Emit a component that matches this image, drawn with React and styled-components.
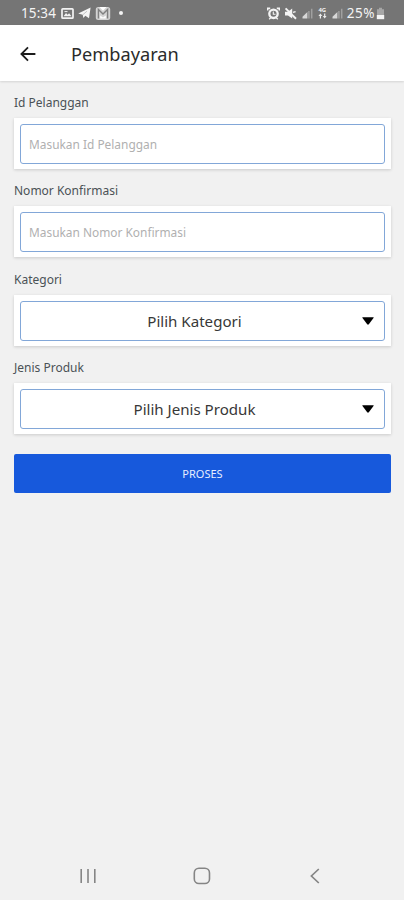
// react stuff
import { React, useState } from "react";
// styled components
import styled, { createGlobalStyle } from "styled-components";

const textFields = [
  {
    name: "idPelanggan",
    label: "Id Pelanggan",
    placeholder: "Masukan Id Pelanggan",
  },
  {
    name: "nomorKonfirmasi",
    label: "Nomor Konfirmasi",
    placeholder: "Masukan Nomor Konfirmasi",
  },
];

const pickerFields = [
  { name: "kategori", label: "Kategori", text: "Pilih Kategori" },
  { name: "produk", label: "Jenis Produk", text: "Pilih Jenis Produk" },
];

const StatusIcons = () => {
  return (
    <>
      {/* gallery */}
      <Icon width="13" height="13" viewBox="0 0 13 13">
        <rect x="1" y="1.8" width="11" height="9.4" rx="0.8" fill="none" stroke="#f2f2f2" strokeWidth="1.7" />
        <path d="M2.5 9.3 5 6l1.6 1.8 1.5-1.6 2.4 3.1z" fill="#f2f2f2" />
        <path d="M3.5 4.6h3" stroke="#f2f2f2" strokeWidth="1" />
      </Icon>
      {/* telegram */}
      <Icon width="13" height="12" viewBox="0 0 13 12" $left={4}>
        <path d="M0.2 6.6 12.6 0.6 11 11.2 7.3 8.8 5.4 10.9 4.7 7.8z" fill="#f4f4f4" />
        <path d="M5 7.6 9 4.2" stroke="#a5a5a5" strokeWidth="0.6" />
      </Icon>
      {/* mail */}
      <Icon width="16" height="15" viewBox="0 0 16 15" $left={4}>
        <rect x="0.8" y="1" width="14.4" height="13" rx="2.5" fill="#d4d4d4" />
        <path d="M3.4 12.5v-9L8 8l4.6-4.5v9" fill="none" stroke="#808080" strokeWidth="1.4" />
        <path d="M5.2 12.6V9.4L8 11.4l2.8-2v3.2z" fill="#fff" />
        <path d="M4.5 1h7L8 4.8z" fill="#fff" />
      </Icon>
    </>
  );
};

const Signal = ({ left }) => {
  return (
    <Icon width="11" height="11" viewBox="0 0 11 11" $left={left}>
      <path d="M0.5 10.5V8.8L5.4 4v6.5z" fill="#d8d8d8" />
      <path d="M6.9 10.5V3M9.7 10.5V0.8" stroke="#a0a0a0" strokeWidth="1.5" />
    </Icon>
  );
};

const App = () => {
  // state
  const [values, setValues] = useState({});
  return (
    <>
      <GlobalStyle />
      <Screen>
        {/* status bar */}
        <StatusBar>
          <StatusText $size={13.5} $spacing={0.1}>
            15:34
          </StatusText>
          <StatusGroup $left={5}>
            <StatusIcons />
            <Dot />
          </StatusGroup>
          <StatusGroup $left="auto">
            {/* alarm */}
            <Icon width="13" height="13" viewBox="0 0 13 13">
              <path d="M0.6 3.6V1.4h2.6M12.4 3.6V1.4H9.8" fill="none" stroke="#f4f4f4" strokeWidth="1.7" />
              <circle cx="6.5" cy="6.8" r="4.2" fill="#757575" stroke="#f4f4f4" strokeWidth="2.3" />
              <path d="M6.3 4.4v2.9h2.2" fill="none" stroke="#f4f4f4" strokeWidth="1.1" />
              <path d="M2.2 12.2 4 10.6M10.8 12.2 9 10.6" stroke="#f4f4f4" strokeWidth="1.4" />
            </Icon>
            {/* muted */}
            <Icon width="13" height="13" viewBox="0 0 13 13" $left={4}>
              <path d="M1 4.7h3L8.2 1.4v10L4 8.6H1z" fill="#f4f4f4" />
              <path d="M9 5.4 11.6 4.6" stroke="#f4f4f4" strokeWidth="1.4" />
              <path d="M1.6 1.4 12 11.8" stroke="#f4f4f4" strokeWidth="2" />
            </Icon>
            <Signal left={5} />
            <Network>
              <span>4G</span>
              <svg width="9" height="6" viewBox="0 0 9 6">
                <path d="M0.4 3 2.4 0.4 4.3 3H3v2.6H1.8V3zM4.8 3h1.3V0.4h1.2V3h1.3L6.7 5.6z" fill="#eee" />
              </svg>
            </Network>
            <Signal left={5} />
            <StatusText $size={13.5} $spacing={0.5} $left={4}>
              25%
            </StatusText>
            <Icon width="9" height="13" viewBox="0 0 9 13" $left={1}>
              <path d="M3 0.8h3v1.4h2V8H1V2.2h2z" fill="#a6a6a6" />
              <path d="M0.8 8h7.4v4.2H0.8z" fill="#f4f4f4" />
            </Icon>
          </StatusGroup>
        </StatusBar>
        {/* header */}
        <Header>
          <BackButton type="button" aria-label="Kembali">
            <svg width="16" height="16" viewBox="0 0 16 16">
              <path d="M15.4 8H1.6M8 1.4 1.4 8 8 14.6" fill="none" stroke="#1c1c1c" strokeWidth="1.8" />
            </svg>
          </BackButton>
          <Title>Pembayaran</Title>
        </Header>
        {/* form */}
        <Form onSubmit={(e) => e.preventDefault()}>
          {textFields.map((item) => {
            const { name, label, placeholder } = item;
            return (
              <Field key={name}>
                <Label htmlFor={name}>{label}</Label>
                <Card>
                  <Input
                    id={name}
                    type="text"
                    placeholder={placeholder}
                    value={values[name] || ""}
                    onChange={(e) => {
                      setValues({ ...values, [name]: e.target.value });
                    }}
                  />
                </Card>
              </Field>
            );
          })}
          {pickerFields.map((item) => {
            const { name, label, text } = item;
            return (
              <Field key={name}>
                <Label as="span">{label}</Label>
                <Card>
                  <Picker type="button">
                    <PickerText>{text}</PickerText>
                    <svg width="12" height="8" viewBox="0 0 12 8">
                      <path d="M0.8 0.3h10.4q0.9 0 0.3 0.8L6.8 7.2q-0.8 0.9-1.6 0L0.5 1.1q-0.6-0.8 0.3-0.8z" fill="#000" />
                    </svg>
                  </Picker>
                </Card>
              </Field>
            );
          })}
          <Submit type="submit">PROSES</Submit>
        </Form>
        {/* system navigation */}
        <NavBar>
          <svg width="16" height="16" viewBox="0 0 16 16">
            <path d="M1.2 1v14M8 1v14M14.8 1v14" stroke="#858585" strokeWidth="1.6" />
          </svg>
          <HomeIcon width="18" height="18" viewBox="0 0 18 18">
            <rect x="1.3" y="1.3" width="15.2" height="15.2" rx="4.6" fill="none" stroke="#858585" strokeWidth="1.6" />
          </HomeIcon>
          <svg width="10" height="16" viewBox="0 0 10 16">
            <path d="M8.8 1 1.4 8l7.4 7" fill="none" stroke="#858585" strokeWidth="1.7" />
          </svg>
        </NavBar>
      </Screen>
    </>
  );
};

const GlobalStyle = createGlobalStyle`
  * {
    box-sizing: border-box;
  }
  body {
    margin: 0;
    background: #f1f1f1;
  }
  body,
  button,
  input {
    font-family: "Noto Sans", "Open Sans", sans-serif;
  }
  svg {
    display: block;
    flex: none;
  }
`;

const Screen = styled.main`
  width: 404px;
  height: 900px;
  display: flex;
  flex-direction: column;
  background: #f1f1f1;
  overflow: hidden;
`;

const StatusBar = styled.div`
  flex: none;
  height: 25px;
  padding: 1px 19px 0 21px;
  display: flex;
  align-items: center;
  background: #757575;
  color: #f4f4f4;
`;

const StatusGroup = styled.div`
  display: flex;
  align-items: center;
  margin-left: ${({ $left }) => ($left === "auto" ? "auto" : `${$left}px`)};
`;

const StatusText = styled.span`
  font-size: ${({ $size }) => $size}px;
  letter-spacing: ${({ $spacing }) => $spacing}px;
  line-height: 24px;
  margin-left: ${({ $left }) => $left || 0}px;
`;

const Icon = styled.svg`
  margin-left: ${({ $left }) => $left || 0}px;
`;

const Dot = styled.span`
  width: 4px;
  height: 4px;
  margin-left: 8px;
  border-radius: 50%;
  background: #f4f4f4;
`;

const Network = styled.span`
  margin-left: 5px;
  display: flex;
  flex-direction: column;
  align-items: center;
  font-size: 6px;
  font-weight: 700;
  line-height: 6px;
`;

const Header = styled.header`
  flex: none;
  height: 56px;
  padding: 1px 0 0 20px;
  display: flex;
  align-items: center;
  background: #fff;
  box-shadow: 0 1px 2px rgba(0, 0, 0, 0.12);
`;

const BackButton = styled.button`
  padding: 0;
  border: 0;
  background: none;
`;

const Title = styled.h1`
  margin: 0 0 0 35px;
  color: #2b2b2b;
  font-size: 18.2px;
  font-weight: 400;
  line-height: 24px;
`;

const Form = styled.form`
  flex: 1;
  padding: 14px 13px 0 14px;
`;

const Field = styled.div`
  height: 88.3px;
`;

const Label = styled.label`
  display: block;
  height: 23px;
  color: #4b5256;
  font-size: 12px;
  line-height: 15px;
`;

const Card = styled.div`
  height: 51px;
  padding: 6px;
  background: #fff;
  box-shadow: 0 1px 3px rgba(0, 0, 0, 0.16);
`;

const Input = styled.input`
  display: block;
  width: 100%;
  height: 40px;
  padding: 0 8px;
  border: 1px solid #82a7d8;
  border-radius: 3px;
  outline: none;
  background: #fff;
  font-size: 11.9px;
  &::placeholder {
    color: #b0b0b0;
    opacity: 1;
  }
`;

const Picker = styled.button`
  width: 100%;
  height: 40px;
  padding: 0 10px 0 0;
  border: 1px solid #82a7d8;
  border-radius: 3px;
  display: flex;
  align-items: center;
  background: #fff;
  color: #383838;
`;

const PickerText = styled.span`
  flex: 1;
  padding-left: 6px;
  font-size: 15.1px;
  text-align: center;
`;

const Submit = styled.button`
  display: block;
  width: 100%;
  height: 39px;
  margin-top: 6px;
  padding: 0;
  border: 0;
  border-radius: 2px;
  background: #1759dc;
  color: #e6eeff;
  font-size: 11px;
`;

const NavBar = styled.nav`
  flex: none;
  height: 48px;
  padding: 0 84px 0 80px;
  display: flex;
  align-items: center;
  justify-content: space-between;
`;

const HomeIcon = styled.svg`
  margin-right: 3px;
`;

export default App;
